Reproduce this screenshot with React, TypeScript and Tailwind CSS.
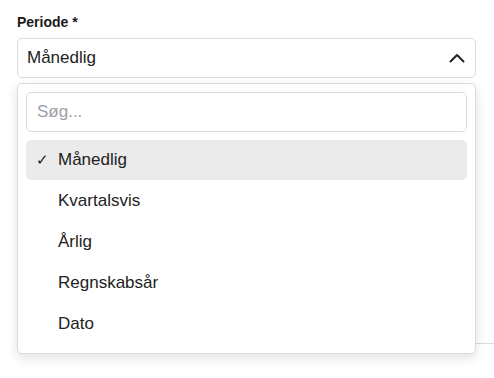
import { useState } from "react"

const options = ["Månedlig", "Kvartalsvis", "Årlig", "Regnskabsår", "Dato"]

function ChevronUp() {
    return (
        <svg width="16" height="10" viewBox="0 0 16 10" fill="none" className="text-[#222]">
            <polyline points="1.5,8.5 8,2 14.5,8.5" stroke="currentColor" strokeWidth="2" strokeLinecap="round" strokeLinejoin="round" />
        </svg>
    )
}

export default function App() {
    const [value, setValue] = useState("Månedlig")
    const [query, setQuery] = useState("")

    const filtered = options.filter(o => o.toLowerCase().includes(query.toLowerCase()))

    return (
        <div className="min-h-screen bg-white pl-[17px] pr-[18px] pt-3 font-['Liberation_Sans',Arial,sans-serif] text-[#222]">
            <label className="block text-[14px] leading-5 font-bold text-[#1a1a1a] mb-1.5">Periode *</label>

            <div className="relative">
                {/* trigger */}
                <button className="w-full h-[40px] flex items-center justify-between pl-[9px] pr-[10px] rounded-[5px] border border-[#dcdcdc] bg-white text-[17px]">
                    <span>{value}</span>
                    <ChevronUp />
                </button>

                {/* dropdown */}
                <div className="absolute left-0 right-0 top-full mt-[5px] z-10 bg-white border border-[#dcdcdc] rounded-[5px] px-2 pt-2 pb-[9px] shadow-[0_4px_12px_rgba(0,0,0,0.12)]">
                    <input
                        value={query}
                        onChange={e => setQuery(e.target.value)}
                        placeholder="Søg..."
                        className="w-full h-[40px] px-[10px] rounded-[5px] border border-[#dcdcdc] text-[17px] outline-none placeholder:text-[#9aa0a8]"
                    />
                    <ul className="mt-2 flex flex-col gap-px">
                        {filtered.map(o => (
                            <li
                                key={o}
                                onClick={() => setValue(o)}
                                className={`h-[40px] flex items-center rounded-[5px] cursor-pointer text-[17px] ${o === value ? "bg-[#ebebeb]" : ""}`}
                            >
                                <span className="w-[32px] pl-[10px] text-[15px]">{o === value ? "✓" : ""}</span>
                                <span>{o}</span>
                            </li>
                        ))}
                    </ul>
                </div>
            </div>

            <div className="mt-[265px] -mr-[18px] border-t border-[#dcdcdc]"></div>
        </div>
    )
}
